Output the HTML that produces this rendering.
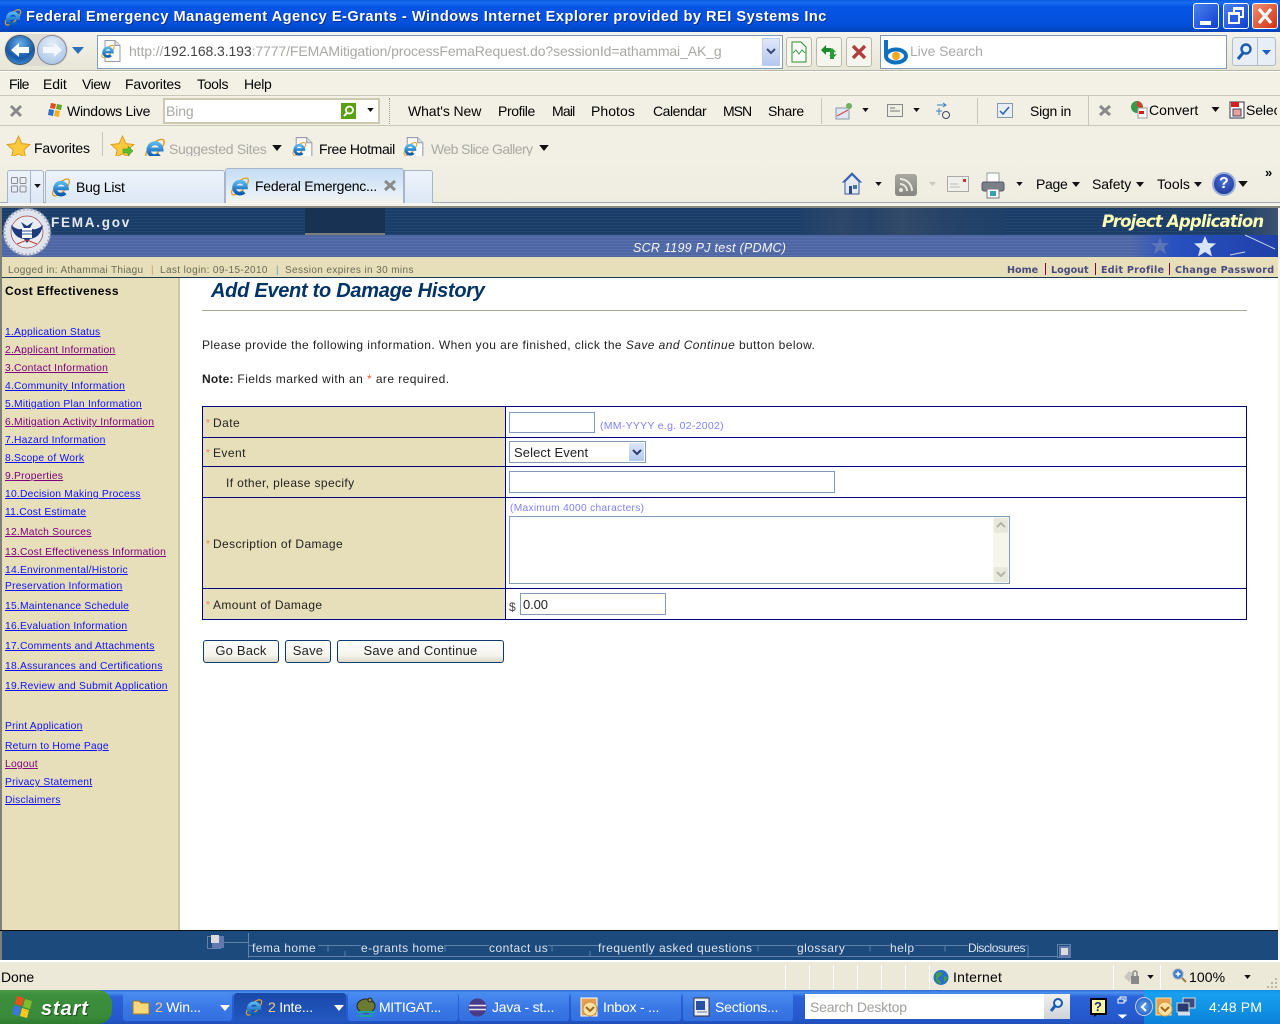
<!DOCTYPE html>
<html><head><meta charset="utf-8"><title>Federal Emergency Management Agency E-Grants</title>
<style>
html,body{margin:0;padding:0;width:1280px;height:1024px;overflow:hidden;background:#fff}
body{position:relative;font-family:"Liberation Sans",Arial,sans-serif;color:#000}
.a{position:absolute}
.t{position:absolute;white-space:nowrap;line-height:16px;font-size:14px;letter-spacing:-.1px}
.g{color:#a9a9a3}
.s{position:absolute;left:5px;font-size:10.3px;line-height:12px;letter-spacing:.22px;white-space:nowrap;color:#1010ff;text-decoration:underline}
.v{color:#800080}
.f{font-size:12px;letter-spacing:.43px;color:#222}
.st{position:absolute;left:206px;color:#f08060;font-size:10px;line-height:12px}
.in{position:absolute;box-sizing:border-box;background:#fff;border:1px solid #7f9db9}
.btn{position:absolute;box-sizing:border-box;height:23px;top:640px;border:1px solid #0c3d6e;border-radius:3px;background:linear-gradient(#fff,#f4f3ec 70%,#dcd8c8);font-size:13px;line-height:20px;text-align:center;letter-spacing:.2px;color:#222}
.fl{position:absolute;top:940px;color:#dbe3ee;font-size:12px;line-height:16px;letter-spacing:.45px;white-space:nowrap}
.task{position:absolute;top:993px;height:28px;box-sizing:border-box;background:linear-gradient(#4a8cf0,#3a78e6 50%,#3470e0);border-radius:3px;color:#fff;font-size:14px;line-height:28px;white-space:nowrap;letter-spacing:-.2px}
.r{font-size:10px;line-height:12px;color:#6b6a55;letter-spacing:.38px;position:absolute;top:265px;white-space:nowrap}
.l{font:bold 9.6px "DejaVu Sans",sans-serif;line-height:12px;letter-spacing:.25px;color:#4a4a80;position:absolute;top:265px;white-space:nowrap}
svg{position:absolute;overflow:visible}
</style></head><body>
<svg width="0" height="0" style="left:0;top:0">
<defs>
<linearGradient id="ib" x1="0" y1="0" x2="0" y2="1"><stop offset="0" stop-color="#58b4ec"/><stop offset="1" stop-color="#0b5cb0"/></linearGradient>
<symbol id="ie" viewBox="0 0 24 24">
<ellipse cx="12" cy="12.500" rx="12" ry="4.800" transform="rotate(-45 12 12.500)" fill="none" stroke="#e0a030" stroke-width="1.500"/>
<path d="M5.500 13.500h13a6.500 6.500 0 1 0-2 5" fill="none" stroke="url(#ib)" stroke-width="4"/>
</symbol>
<symbol id="pg" viewBox="0 0 24 24">
<path d="M5 1.500h10l5 5v16H5z" fill="#fbfbf8" stroke="#99a" stroke-width="1"/>
<path d="M15 1.500v5h5" fill="#ddd" stroke="#99a"/>
<use href="#ie" x="0" y="4" width="16" height="16"/>
</symbol>
<symbol id="star" viewBox="0 0 24 24"><path d="M12 1l3.300 7.300 7.700.8-5.800 5.200 1.700 7.700L12 18l-6.900 4 1.700-7.700L1 9.100l7.700-.8z" fill="#fcc83c" stroke="#d99a20" stroke-width=".9"/></symbol>
<symbol id="dn" viewBox="0 0 8 5"><path d="M0 0h8L4 5z" fill="#111"/></symbol>
</defs></svg>

<!-- title bar -->
<div class="a" style="left:0;top:0;width:1280px;height:32px;background:linear-gradient(#0a5ce0 0,#1a6cf0 8%,#0554e4 22%,#0350dc 75%,#0244b8 100%)"></div>
<svg style="left:3px;top:6px" width="20" height="22"><use href="#ie" width="20" height="22"/></svg>
<div class="t" style="left:26px;top:9px;color:#fff;font-weight:bold;font-size:14.6px;letter-spacing:.49px;text-shadow:1px 1px 0 #0a2f90">Federal Emergency Management Agency E-Grants - Windows Internet Explorer provided by REI Systems Inc</div>
<div class="a" style="left:1193px;top:3px;width:26px;height:26px;box-sizing:border-box;border:1px solid #fff;border-radius:3px;background:linear-gradient(135deg,#4a80ee,#1040d0)"><div class="a" style="left:6px;top:17px;width:11px;height:4px;background:#fff"></div></div>
<div class="a" style="left:1223px;top:3px;width:26px;height:26px;box-sizing:border-box;border:1px solid #fff;border-radius:3px;background:linear-gradient(135deg,#4a80ee,#1040d0)"><div class="a" style="left:9px;top:3px;width:11px;height:11px;box-sizing:border-box;border:2px solid #fff;border-top-width:3px"></div><div class="a" style="left:4px;top:8px;width:12px;height:12px;box-sizing:border-box;border:2px solid #fff;border-top-width:3px;background:#2a5ce0"></div></div>
<div class="a" style="left:1252px;top:3px;width:26px;height:26px;box-sizing:border-box;border:1px solid #fff;border-radius:3px;background:linear-gradient(135deg,#f09070,#d03010)"></div>
<svg style="left:1252px;top:3px" width="26" height="26"><path d="M7 6l12 14M19 6L7 20" stroke="#fff" stroke-width="3.200"/></svg>

<!-- address row -->
<div class="a" style="left:0;top:32px;width:1280px;height:38px;background:linear-gradient(#f4f3ec,#e8e6d6);border-bottom:1px solid #b8b6a4"></div>
<div class="a" style="left:0;top:71px;width:1280px;height:1px;background:#fff"></div>
<div class="a" style="left:4px;top:34px;width:64px;height:32px;border-radius:16px;background:#dcdcd4"></div>
<svg style="left:5px;top:34px" width="64" height="32">
<defs><radialGradient id="bk" cx=".5" cy=".3" r=".8"><stop offset="0" stop-color="#6ab0ea"/><stop offset=".6" stop-color="#1858a8"/><stop offset="1" stop-color="#4aa0e0"/></radialGradient>
<radialGradient id="fw" cx=".5" cy=".3" r=".8"><stop offset="0" stop-color="#e4eef8"/><stop offset="1" stop-color="#a4c0e4"/></radialGradient></defs>
<circle cx="15" cy="16" r="14.500" fill="url(#bk)" stroke="#456"/>
<path d="M6 16l8-7v4h10v6H14v4z" fill="#fff"/>
<circle cx="47" cy="16" r="14.500" fill="url(#fw)" stroke="#889"/>
<path d="M57 16l-8-7v4H38v6h11v4z" fill="#f4f8fc"/>
</svg>
<svg style="left:72px;top:47px" width="12" height="8"><path d="M0 0h12L6 7z" fill="#2a70b8"/></svg>
<div class="a" style="left:97px;top:35px;width:686px;height:34px;box-sizing:border-box;background:#fff;border:1px solid #7f9db9"></div>
<svg style="left:100px;top:38px" width="24" height="26"><use href="#pg" width="24" height="26"/></svg>
<div class="t" style="left:129px;top:43px;color:#a8a8a4;letter-spacing:-.1px">http://<span style="color:#444">192.168.3.193</span>:7777/FEMAMitigation/processFemaRequest.do?sessionId=athammai_AK_g</div>
<div class="a" style="left:762px;top:38px;width:18px;height:28px;box-sizing:border-box;background:linear-gradient(#e0e8fa,#b4c8f0);border:1px solid #c0ccec"></div>
<svg style="left:766px;top:48px" width="10" height="8"><path d="M1 1l4 4 4-4" fill="none" stroke="#3a4a70" stroke-width="2"/></svg>
<div class="a" style="left:786px;top:37px;width:26px;height:30px;box-sizing:border-box;border:1px solid #b8b8ac;border-radius:3px;background:#f6f6ee"></div>
<svg style="left:791px;top:41px" width="16" height="22"><path d="M1 1h9l5 5v15H1z" fill="#fff" stroke="#2a8a2a"/><path d="M2 12l3-3 3 4 3-4 3 3" fill="none" stroke="#3a9a4a"/></svg>
<div class="a" style="left:816px;top:37px;width:26px;height:30px;box-sizing:border-box;border:1px solid #b8b8ac;border-radius:3px;background:#f6f6ee"></div>
<svg style="left:820px;top:43px" width="18" height="18"><path d="M1 7l5-5v3h5v4H6v3zM17 11l-5 5v-3H8" fill="#1a8a2a"/><path d="M16 9l-4-4-4 4h2v7h4V9z" fill="#2a9a3a"/></svg>
<div class="a" style="left:846px;top:37px;width:26px;height:30px;box-sizing:border-box;border:1px solid #b8b8ac;border-radius:3px;background:#f6f6ee"></div>
<svg style="left:852px;top:45px" width="14" height="14"><path d="M1 1l12 12M13 1L1 13" stroke="#b04040" stroke-width="3.400"/></svg>
<div class="a" style="left:880px;top:35px;width:347px;height:34px;box-sizing:border-box;background:#fff;border:1px solid #7f9db9"></div>
<svg style="left:882px;top:38px" width="27" height="26"><path d="M4 2v16" stroke="#1070c0" stroke-width="4"/><ellipse cx="14" cy="18" rx="10" ry="6.500" fill="#fff" stroke="#1070c0" stroke-width="4"/><circle cx="14" cy="18" r="4" fill="#f8a820"/></svg>
<div class="t" style="left:910px;top:43px;color:#aaa">Live Search</div>
<div class="a" style="left:1232px;top:37px;width:26px;height:29px;box-sizing:border-box;border:1px solid #b4bcc8;border-radius:3px 0 0 3px;background:#e8eef6"></div>
<div class="a" style="left:1258px;top:37px;width:18px;height:29px;box-sizing:border-box;border:1px solid #b4bcc8;border-left:0;border-radius:0 3px 3px 0;background:#e8eef6"></div>
<svg style="left:1236px;top:42px" width="18" height="20"><circle cx="10" cy="7" r="4.500" fill="#dfefff" stroke="#1a5ab0" stroke-width="2.400"/><path d="M7 11l-5 6" stroke="#1a5ab0" stroke-width="3"/></svg>
<svg style="left:1262px;top:50px" width="10" height="6"><path d="M0 0h9L4.500 5z" fill="#1a60c8"/></svg>

<!-- menu row -->
<div class="a" style="left:0;top:72px;width:1280px;height:23px;background:#f3f1e6;border-bottom:1px solid #c8c6b6"></div>
<div class="t" style="left:9px;top:76px;letter-spacing:-.7px">File</div>
<div class="t" style="left:43px;top:76px">Edit</div>
<div class="t" style="left:82px;top:76px;letter-spacing:-.5px">View</div>
<div class="t" style="left:125px;top:76px;letter-spacing:-.2px">Favorites</div>
<div class="t" style="left:197px;top:76px;letter-spacing:-.3px">Tools</div>
<div class="t" style="left:244px;top:76px;letter-spacing:-.35px">Help</div>

<!-- windows live bar -->
<div class="a" style="left:0;top:96px;width:1280px;height:60px;background:#f2f0e5"></div>
<div class="a" style="left:0;top:125px;width:1280px;height:1px;background:#c8c6b6"></div>
<svg style="left:10px;top:105px" width="13" height="12"><path d="M1 1l10 10M11 1L1 11" stroke="#8a8a8a" stroke-width="3"/></svg>
<svg style="left:47px;top:102px" width="16" height="16"><path d="M4 1l5 1-1 5-5-1z" fill="#e04a20"/><path d="M10 2l5 1-1 5-5-1z" fill="#60a820"/><path d="M2 7l5 1-1 6-5-1z" fill="#2a70d0"/><path d="M8 8l5 1-1 6-5-1z" fill="#f0b020"/></svg>
<div class="t" style="left:67px;top:103px;letter-spacing:-.27px">Windows Live</div>
<div class="a" style="left:163px;top:98px;width:217px;height:26px;box-sizing:border-box;background:#fff;border:2px solid #cdc9b0"></div>
<div class="t g" style="left:166px;top:103px">Bing</div>
<div class="a" style="left:341px;top:103px;width:15px;height:16px;background:#5aa010"></div>
<svg style="left:341px;top:103px" width="15" height="16"><circle cx="8.500" cy="7" r="3.500" fill="none" stroke="#fff" stroke-width="1.800"/><path d="M6 10l-3 3" stroke="#fff" stroke-width="2"/></svg>
<svg style="left:367px;top:108px" width="7" height="4"><use href="#dn" width="7" height="4"/></svg>
<div class="a" style="left:389px;top:98px;height:26px;border-left:1px dotted #999"></div>
<div class="t" style="left:408px;top:103px">What's New</div>
<div class="t" style="left:498px;top:103px;letter-spacing:-.4px">Profile</div>
<div class="t" style="left:552px;top:103px;letter-spacing:-.8px">Mail</div>
<div class="t" style="left:591px;top:103px;letter-spacing:.05px">Photos</div>
<div class="t" style="left:653px;top:103px;letter-spacing:-.45px">Calendar</div>
<div class="t" style="left:723px;top:103px;letter-spacing:-1px">MSN</div>
<div class="t" style="left:768px;top:103px;letter-spacing:-.3px">Share</div>
<div class="a" style="left:821px;top:98px;width:1px;height:26px;background:#c8c6b6"></div>
<svg style="left:835px;top:102px" width="18" height="18"><rect x="1" y="6" width="13" height="11" fill="#dde8f4" stroke="#8899aa"/><path d="M2 14l11-6" stroke="#d04040"/><circle cx="14" cy="4" r="3" fill="#70b060"/></svg>
<svg style="left:862px;top:108px" width="7" height="4"><use href="#dn" width="7" height="4"/></svg>
<svg style="left:887px;top:104px" width="16" height="13"><rect x=".5" y=".5" width="15" height="12" fill="#eeeee4" stroke="#888"/><path d="M3 4h5M3 7h10" stroke="#777"/></svg>
<svg style="left:913px;top:108px" width="7" height="4"><use href="#dn" width="7" height="4"/></svg>
<svg style="left:935px;top:102px" width="16" height="18"><path d="M2 3h8M8 1l3 2-3 2M4 6v7M1 9h6" stroke="#3a80c0" fill="none"/><circle cx="11" cy="13" r="3.500" fill="none" stroke="#446"/></svg>
<div class="a" style="left:977px;top:98px;width:1px;height:26px;background:#c8c6b6"></div>
<svg style="left:997px;top:103px" width="16" height="15"><rect x=".5" y=".5" width="15" height="14" fill="#e8eef8" stroke="#8899aa"/><path d="M3 8l3 3 6-7" fill="none" stroke="#2a60b0" stroke-width="1.500"/></svg>
<div class="t" style="left:1030px;top:103px;letter-spacing:-.25px">Sign in</div>
<div class="a" style="left:1088px;top:96px;width:1px;height:29px;background:#c8c6b6"></div>
<svg style="left:1099px;top:105px" width="12" height="11"><path d="M1 1l10 9M11 1L1 10" stroke="#8a8a8a" stroke-width="3"/></svg>
<svg style="left:1130px;top:100px" width="18" height="18"><circle cx="7" cy="7" r="6" fill="#3a9a4a"/><path d="M7 1a6 6 0 0 1 5 9l-5-4z" fill="#d04030"/><rect x="8" y="8" width="9" height="10" fill="#fff" stroke="#999"/><rect x="9" y="11" width="5" height="3" fill="#d02020"/></svg>
<div class="t" style="left:1149px;top:102px;letter-spacing:.05px">Convert</div>
<svg style="left:1211px;top:107px" width="9" height="5"><use href="#dn" width="9" height="5"/></svg>
<svg style="left:1229px;top:101px" width="16" height="18"><rect x="1" y="1" width="14" height="16" fill="#fff" stroke="#334"/><rect x="2" y="1" width="8" height="5" fill="#d02020"/><rect x="4" y="8" width="8" height="7" fill="#e8a0a0" stroke="#446"/></svg>
<div class="t" style="left:1246px;top:102px;width:31px;overflow:hidden">Select</div>

<!-- favorites -->
<svg style="left:6px;top:135px" width="25" height="25"><use href="#star" width="25" height="25"/></svg>
<div class="t" style="left:34px;top:140px;letter-spacing:-.2px">Favorites</div>
<div class="a" style="left:102px;top:132px;width:1px;height:32px;background:#c8c6b6"></div>
<svg style="left:110px;top:135px" width="25" height="25"><use href="#star" width="25" height="25"/><path d="M13 14h5v-3l5 5-5 5v-3h-5z" fill="#58c030" stroke="#3a8a20" stroke-width=".5"/></svg>
<svg style="left:143px;top:135px" width="24" height="26"><use href="#ie" width="24" height="26"/></svg>
<div class="t g" style="left:169px;top:141px;letter-spacing:-.3px">Suggested Sites</div>
<svg style="left:272px;top:145px" width="10" height="6"><use href="#dn" width="10" height="6"/></svg>
<svg style="left:291px;top:135px" width="25" height="27"><use href="#pg" width="25" height="27"/></svg>
<div class="t" style="left:319px;top:141px;letter-spacing:-.35px">Free Hotmail</div>
<svg style="left:402px;top:135px" width="25" height="27"><use href="#pg" width="25" height="27"/></svg>
<div class="t g" style="left:431px;top:141px;letter-spacing:-.56px">Web Slice Gallery</div>
<svg style="left:539px;top:145px" width="10" height="6"><use href="#dn" width="10" height="6"/></svg>

<!-- tabs -->
<div class="a" style="left:0;top:156px;width:1280px;height:47px;background:linear-gradient(#f2f0e5,#efede0)"></div>
<div class="a" style="left:0;top:202px;width:1280px;height:1px;background:#a0a8bc"></div>
<div class="a" style="left:0;top:203px;width:1280px;height:3px;background:#f4f3ec"></div>
<div class="a" style="left:7px;top:170px;width:37px;height:33px;box-sizing:border-box;border:1px solid #a8b4c8;border-bottom:0;border-radius:3px 3px 0 0;background:linear-gradient(#eef3fa,#dce8f6)"></div>
<div class="a" style="left:30px;top:170px;width:1px;height:33px;background:#a8b4c8"></div>
<svg style="left:11px;top:177px" width="16" height="16"><g fill="none" stroke="#8a8a90"><rect x=".5" y=".5" width="6" height="6" rx="1"/><rect x="9" y=".5" width="6" height="6" rx="1"/><rect x=".5" y="9" width="6" height="6" rx="1"/><rect x="9" y="9" width="6" height="6" rx="1"/></g></svg>
<svg style="left:34px;top:184px" width="7" height="4"><use href="#dn" width="7" height="4"/></svg>
<div class="a" style="left:45px;top:170px;width:180px;height:33px;box-sizing:border-box;border:1px solid #a8b4c8;border-bottom:0;border-radius:3px 3px 0 0;background:linear-gradient(#eef3fa,#dce8f6)"></div>
<svg style="left:50px;top:175px" width="22" height="24"><use href="#ie" width="22" height="24"/></svg>
<div class="t" style="left:76px;top:179px;letter-spacing:-.25px">Bug List</div>
<div class="a" style="left:225px;top:168px;width:179px;height:35px;box-sizing:border-box;border:1px solid #a8b4c8;border-bottom:0;border-radius:3px 3px 0 0;background:linear-gradient(#c4dcf4,#e4eef8 70%,#f4f4ec)"></div>
<svg style="left:229px;top:174px" width="22" height="24"><use href="#ie" width="22" height="24"/></svg>
<div class="t" style="left:255px;top:178px;letter-spacing:-.26px">Federal Emergenc...</div>
<svg style="left:384px;top:180px" width="12" height="11"><path d="M1 1l10 9M11 1L1 10" stroke="#8a8a8a" stroke-width="3"/></svg>
<div class="a" style="left:404px;top:170px;width:29px;height:33px;box-sizing:border-box;border:1px solid #a8b4c8;border-bottom:0;border-radius:0 3px 0 0;background:linear-gradient(#eef3fa,#dce8f6)"></div>
<!-- command bar -->
<svg style="left:842px;top:172px" width="20" height="23"><path d="M10 1L1 10h2v12h14V10h2z" fill="#e4e8f0" stroke="#345a9a"/><path d="M2 10l8-8 8 8" fill="none" stroke="#3a64b8" stroke-width="2"/><rect x="7" y="14" width="3" height="8" fill="#2a4a8a"/><rect x="11" y="13" width="4" height="4" fill="#4a70a8"/></svg>
<svg style="left:875px;top:182px" width="7" height="4"><use href="#dn" width="7" height="4"/></svg>
<div class="a" style="left:895px;top:174px;width:22px;height:22px;border-radius:3px;background:linear-gradient(#a8a8a0,#868680)"></div>
<svg style="left:895px;top:174px" width="22" height="22"><g fill="none" stroke="#e8e8e0" stroke-width="2"><path d="M5 10a7 7 0 0 1 7 7"/><path d="M5 5a12 12 0 0 1 12 12"/></g><circle cx="6" cy="16" r="2" fill="#e8e8e0"/></svg>
<svg style="left:929px;top:182px" width="7" height="4"><path d="M0 0h7L3.500 4z" fill="#c8c8c0"/></svg>
<svg style="left:947px;top:176px" width="22" height="16"><rect x=".5" y=".5" width="21" height="15" fill="#f0f0ea" stroke="#aaa"/><path d="M3 8h8M3 11h10" stroke="#bbb"/><rect x="16" y="3" width="3" height="3" fill="#d03030"/></svg>
<svg style="left:981px;top:172px" width="24" height="27"><rect x="6" y="1" width="12" height="10" fill="#fff" stroke="#999"/><rect x="1" y="10" width="22" height="9" rx="2" fill="#7a8088" stroke="#556"/><rect x="6" y="17" width="12" height="9" fill="#fff" stroke="#778"/><rect x="9" y="19" width="6" height="5" fill="#38a0b0"/></svg>
<svg style="left:1016px;top:182px" width="7" height="4"><use href="#dn" width="7" height="4"/></svg>
<div class="t" style="left:1036px;top:176px;letter-spacing:-.3px">Page</div>
<svg style="left:1072px;top:182px" width="8" height="5"><use href="#dn" width="8" height="5"/></svg>
<div class="t" style="left:1092px;top:176px">Safety</div>
<svg style="left:1136px;top:182px" width="8" height="5"><use href="#dn" width="8" height="5"/></svg>
<div class="t" style="left:1157px;top:176px;letter-spacing:.05px">Tools</div>
<svg style="left:1194px;top:182px" width="8" height="5"><use href="#dn" width="8" height="5"/></svg>
<div class="a" style="left:1212px;top:172px;width:24px;height:24px;box-sizing:border-box;border-radius:50%;border:2px solid #9ab0d8;background:radial-gradient(circle at 50% 35%,#4a70d8,#18308c)"></div>
<div class="t" style="left:1219px;top:176px;color:#fff;font-weight:bold;font-size:16px">?</div>
<svg style="left:1238px;top:181px" width="10" height="6"><use href="#dn" width="10" height="6"/></svg>
<div class="t" style="left:1265px;top:165px;font-size:13px;font-weight:bold">»</div>

<!-- banner -->
<div class="a" style="left:0;top:206px;width:1280px;height:2px;background:#8a8a80"></div>
<div class="a" style="left:2px;top:208px;width:1276px;height:27px;background:repeating-linear-gradient(#1a3c68 0,#1a3c68 2px,#24466e 2px,#24466e 3px)"></div>
<div class="a" style="left:305px;top:208px;width:80px;height:27px;background:#183254"></div>
<div class="a" style="left:305px;top:233px;width:80px;height:2px;background:#7c7c7c"></div>
<div class="a" style="left:800px;top:208px;width:205px;height:27px;opacity:.75;background:linear-gradient(90deg,#1f4168,#33496a 20%,#2a4468 35%,#3a4e68 50%,#2a4468 70%,#1f4168)"></div>
<div class="a" style="left:1240px;top:208px;width:38px;height:27px;background:linear-gradient(90deg,#1f4168,#3c5270)"></div>
<div class="a" style="left:2px;top:235px;width:1276px;height:22px;background:repeating-linear-gradient(#4f66a4 0,#4f66a4 2px,#5870ac 2px,#5870ac 3px)"></div>
<div class="a" style="left:1130px;top:235px;width:148px;height:22px;background:linear-gradient(90deg,rgba(40,70,180,0),#2850c0 30%,#2040a8)"></div>
<svg style="left:1130px;top:235px" width="148" height="22"><path d="M75 1l3 7 8 .5-6 5 2 8-7-4.500-7 4.500 2-8-6-5 8-.5z" fill="#d8e4f8"/><path d="M30 2l2 6 7 0-5 4 2 7-6-4-6 4 2-7-5-4 7 0z" fill="#6a80b8" opacity=".7"/><path d="M115 0l30 14M100 20l15-3" stroke="#c8d4f0" fill="none"/></svg>
<svg style="left:3px;top:208px" width="48" height="48"><circle cx="24" cy="24" r="23.500" fill="#dfe4ee"/><circle cx="24" cy="24" r="23" fill="none" stroke="#8a94b0" stroke-dasharray="2 2" stroke-width="3" opacity=".7"/><circle cx="24" cy="24" r="16" fill="#e8ecf4" stroke="#a04040" stroke-width=".7"/><path d="M8 17c6 5 10 5 13 3l-3-6 6 4 6-4-3 6c3 2 7 2 13-3-2 10-7 13-13 14l-3 4-3-4C15 30 10 27 8 17z" fill="#1c3a7c"/><rect x="19" y="20" width="10" height="10" fill="#fff"/><path d="M19 23h10M19 26h10" stroke="#30508c"/><path d="M14 36l10-4 10 4" stroke="#c04030" fill="none"/></svg>
<div class="t" style="left:51px;top:215px;color:#e4e8f0;font-weight:bold;font-size:13.500px;letter-spacing:1.75px">FEMA.gov</div>
<div class="t" style="left:1102px;top:214px;color:#ffffb4;font:italic bold 16.500px/16px 'DejaVu Sans',sans-serif;letter-spacing:-.8px">Project Application</div>
<div class="t" style="left:633px;top:240px;color:#f4f6fc;font-style:italic;font-size:12.500px;letter-spacing:.27px">SCR 1199 PJ test (PDMC)</div>

<div class="a" style="left:2px;top:257px;width:1276px;height:20px;background:#e6dfb9"></div>
<div class="a" style="left:2px;top:277px;width:1276px;height:1px;background:#1c3a50"></div>
<div class="r" style="left:8px;letter-spacing:.32px">Logged in: Athammai Thiagu</div>
<div class="r" style="left:151px;color:#c0a070">|</div>
<div class="r" style="left:160px">Last login: 09-15-2010</div>
<div class="r" style="left:276px;color:#70a0b0">|</div>
<div class="r" style="left:285px">Session expires in 30 mins</div>
<div class="l" style="left:1007px;letter-spacing:0">Home</div>
<div class="a" style="left:1045px;top:263px;width:1px;height:12px;background:#800040"></div>
<div class="l" style="left:1051px;letter-spacing:0">Logout</div>
<div class="a" style="left:1095px;top:263px;width:1px;height:12px;background:#800040"></div>
<div class="l" style="left:1101px">Edit Profile</div>
<div class="a" style="left:1169px;top:263px;width:1px;height:12px;background:#800040"></div>
<div class="l" style="left:1175px">Change Password</div>

<!-- sides -->
<div class="a" style="left:0;top:208px;width:2px;height:754px;background:#808078"></div>
<div class="a" style="left:1278px;top:208px;width:2px;height:754px;background:#f4f3ec"></div>

<!-- sidebar -->
<div class="a" style="left:2px;top:278px;width:176px;height:652px;background:#e6dfb9"></div>
<div class="a" style="left:178px;top:278px;width:2px;height:652px;background:#cdc8a0"></div>
<div class="t" style="left:5px;top:283px;font-weight:bold;font-size:12px;letter-spacing:.36px">Cost Effectiveness</div>
<div class="s" style="top:327px">1.Application Status</div>
<div class="s v" style="top:345px">2.Applicant Information</div>
<div class="s v" style="top:363px">3.Contact Information</div>
<div class="s" style="top:381px">4.Community Information</div>
<div class="s" style="top:399px">5.Mitigation Plan Information</div>
<div class="s v" style="top:417px">6.Mitigation Activity Information</div>
<div class="s" style="top:435px">7.Hazard Information</div>
<div class="s" style="top:453px">8.Scope of Work</div>
<div class="s v" style="top:471px">9.Properties</div>
<div class="s" style="top:489px">10.Decision Making Process</div>
<div class="s" style="top:507px">11.Cost Estimate</div>
<div class="s v" style="top:527px">12.Match Sources</div>
<div class="s v" style="top:547px">13.Cost Effectiveness Information</div>
<div class="s" style="top:565px">14.Environmental/Historic</div>
<div class="s" style="top:581px">Preservation Information</div>
<div class="s" style="top:601px">15.Maintenance Schedule</div>
<div class="s" style="top:621px">16.Evaluation Information</div>
<div class="s" style="top:641px">17.Comments and Attachments</div>
<div class="s" style="top:661px">18.Assurances and Certifications</div>
<div class="s" style="top:681px">19.Review and Submit Application</div>
<div class="s" style="top:721px">Print Application</div>
<div class="s" style="top:741px">Return to Home Page</div>
<div class="s v" style="top:759px">Logout</div>
<div class="s" style="top:777px">Privacy Statement</div>
<div class="s" style="top:795px">Disclaimers</div>

<!-- content -->
<div class="t" style="left:211px;top:281px;font-size:20px;line-height:20px;font-weight:bold;font-style:italic;color:#003366;letter-spacing:-.28px">Add Event to Damage History</div>
<div class="a" style="left:202px;top:310px;width:1045px;height:1px;background:#aaa890"></div>
<div class="t f" style="left:202px;top:337px">Please provide the following information. When you are finished, click the <i>Save and Continue</i> button below.</div>
<div class="t f" style="left:202px;top:371px"><b style="letter-spacing:.2px">Note:</b> Fields marked with an <span style="color:#e06040">*</span> are required.</div>

<!-- form table -->
<div class="a" style="left:202px;top:406px;width:303px;height:214px;background:#e6dfb9"></div>
<div class="a" style="left:202px;top:406px;width:1045px;height:214px;box-sizing:border-box;border:1px solid #000080"></div>
<div class="a" style="left:505px;top:406px;width:1px;height:214px;background:#000080"></div>
<div class="a" style="left:202px;top:437px;width:1045px;height:1px;background:#000080"></div>
<div class="a" style="left:202px;top:466px;width:1045px;height:1px;background:#000080"></div>
<div class="a" style="left:202px;top:497px;width:1045px;height:1px;background:#000080"></div>
<div class="a" style="left:202px;top:588px;width:1045px;height:1px;background:#000080"></div>
<div class="st" style="top:418px">*</div><div class="t f" style="left:213px;top:415px">Date</div>
<div class="st" style="top:448px">*</div><div class="t f" style="left:213px;top:445px">Event</div>
<div class="t f" style="left:226px;top:475px;letter-spacing:.38px">If other, please specify</div>
<div class="st" style="top:539px">*</div><div class="t f" style="left:213px;top:536px;letter-spacing:.38px">Description of Damage</div>
<div class="st" style="top:600px">*</div><div class="t f" style="left:213px;top:597px;letter-spacing:.38px">Amount of Damage</div>

<div class="in" style="left:509px;top:412px;width:86px;height:21px"></div>
<div class="t" style="left:600px;top:418px;font-size:10.500px;color:#8080ff;letter-spacing:.28px">(MM-YYYY e.g. 02-2002)</div>
<div class="in" style="left:509px;top:441px;width:137px;height:22px"></div>
<div class="t f" style="left:514px;top:445px;font-size:13px;letter-spacing:.1px">Select Event</div>
<div class="a" style="left:629px;top:443px;width:15px;height:18px;background:linear-gradient(#dce6fa,#b4c8f0)"></div>
<svg style="left:632px;top:449px" width="10" height="7"><path d="M1 1l4 4 4-4" fill="none" stroke="#2a3a60" stroke-width="2"/></svg>
<div class="in" style="left:509px;top:471px;width:326px;height:22px"></div>
<div class="t" style="left:510px;top:501px;font-size:10.200px;color:#8080ff;letter-spacing:.3px">(Maximum 4000 characters)</div>
<div class="in" style="left:509px;top:516px;width:501px;height:68px"></div>
<div class="a" style="left:993px;top:517px;width:16px;height:66px;background:#f6f6ec"></div>
<div class="a" style="left:994px;top:518px;width:14px;height:15px;background:#e8e8dc;border-radius:2px"></div>
<div class="a" style="left:994px;top:567px;width:14px;height:15px;background:#e8e8dc;border-radius:2px"></div>
<svg style="left:996px;top:522px" width="10" height="7"><path d="M1 5l4-4 4 4" fill="none" stroke="#b4b4a8" stroke-width="2"/></svg>
<svg style="left:996px;top:571px" width="10" height="7"><path d="M1 1l4 4 4-4" fill="none" stroke="#b4b4a8" stroke-width="2"/></svg>
<div class="t f" style="left:509px;top:599px;color:#444">$</div>
<div class="in" style="left:520px;top:593px;width:146px;height:22px"></div>
<div class="t f" style="left:523px;top:597px;font-size:13px;letter-spacing:-.1px">0.00</div>

<div class="btn" style="left:203px;width:76px">Go Back</div>
<div class="btn" style="left:285px;width:46px">Save</div>
<div class="btn" style="left:337px;width:167px">Save and Continue</div>

<!-- footer -->
<div class="a" style="left:0;top:930px;width:1278px;height:1px;background:#111"></div>
<div class="a" style="left:2px;top:931px;width:1276px;height:29px;background:#1d4a7c"></div>
<div class="a" style="left:0;top:960px;width:1280px;height:2px;background:#fff"></div>
<svg style="left:0;top:931px" width="1280" height="29" fill="none" stroke="#5f82ac" stroke-width="1">
<rect x="207.500" y="5.500" width="13" height="12"/>
<path d="M221 11.500h27.500M248.500 2v25M248.500 14.500H1027M248.500 25.500H1027M328 14.500v6M345 20v5M445 14.500v6M552 14.500v6M590 20v5M758 14.500v6M870 14.500v6M945 14.500v6M1028 14v13M1028 25.500h30"/>
<rect x="1057.500" y="13.500" width="13" height="13"/>
</svg>
<div class="a" style="left:212px;top:936px;width:12px;height:12px;background:#6478b0"></div>
<div class="a" style="left:211px;top:935px;width:8px;height:8px;background:#dcdcdc"></div>
<div class="a" style="left:1059px;top:946px;width:12px;height:12px;background:#6478b0"></div>
<div class="a" style="left:1061px;top:948px;width:7px;height:7px;background:#dcdcdc"></div>
<div class="fl" style="left:252px;background:#1d4a7c;padding:0 2px 0 0">fema home</div>
<div class="fl" style="left:361px;background:#1d4a7c">e-grants home</div>
<div class="fl" style="left:489px;background:#1d4a7c">contact us</div>
<div class="fl" style="left:598px;background:#1d4a7c">frequently asked questions</div>
<div class="fl" style="left:797px;background:#1d4a7c">glossary</div>
<div class="fl" style="left:890px;background:#1d4a7c">help</div>
<div class="fl" style="left:968px;background:#1d4a7c;letter-spacing:-.45px">Disclosures</div>

<!-- status bar -->
<div class="a" style="left:0;top:962px;width:1280px;height:28px;background:#ece9d8"></div>
<div class="t" style="left:1px;top:969px">Done</div>
<div class="a" style="left:785px;top:965px;height:24px;width:1px;background:#fff;box-shadow:24px 0 #fff,48px 0 #fff,72px 0 #fff,96px 0 #fff,120px 0 #fff,144px 0 #fff"></div>
<div class="a" style="left:1113px;top:965px;height:24px;width:1px;background:#fff;box-shadow:47px 0 #fff"></div>
<svg style="left:933px;top:969px" width="16" height="17"><circle cx="8" cy="8.500" r="7.500" fill="#2a70c8"/><path d="M3 5c3-3 6-2 6 0 0 3-5 2-4 5 1 2 3 1 3 5-3 0-6-3-5-10zM11 7l3 1c0 3-1 4-3 5z" fill="#40a040"/></svg>
<div class="t" style="left:953px;top:969px;letter-spacing:.2px">Internet</div>
<svg style="left:1123px;top:969px" width="18" height="16"><path d="M1 8l5-6 3 2 1 3-4 6z" fill="#c8c8c0"/><rect x="8" y="7" width="8" height="8" fill="#888"/><path d="M10 7V4a2 2 0 0 1 4 0v3" fill="none" stroke="#888" stroke-width="1.500"/></svg>
<svg style="left:1147px;top:975px" width="7" height="4"><use href="#dn" width="7" height="4"/></svg>
<svg style="left:1172px;top:968px" width="15" height="15"><circle cx="6" cy="6" r="5" fill="#3a7ad0" stroke="#9ab"/><path d="M3.500 6h5M6 3.500v5" stroke="#fff" stroke-width="1.500"/><path d="M10 10l4 4" stroke="#a08040" stroke-width="2"/></svg>
<div class="t" style="left:1189px;top:969px;letter-spacing:.1px">100%</div>
<svg style="left:1244px;top:975px" width="7" height="4"><use href="#dn" width="7" height="4"/></svg>

<!-- taskbar -->
<div class="a" style="left:0;top:990px;width:1280px;height:34px;background:linear-gradient(#3168d5 0,#4a90ef 8%,#2a62d8 20%,#2558cc 85%,#1f4fb8 100%)"></div>
<div class="a" style="left:0;top:990px;width:112px;height:34px;border-radius:0 14px 14px 0;background:linear-gradient(#4a9a4a,#3c8f3c 15%,#3a8a3a 80%,#2e7a2e)"></div>
<svg style="left:10px;top:995px" width="24" height="24"><path d="M7 1l7 2-2 8-7-2z" fill="#e8501c"/><path d="M15 4l7 2-2 8-7-2z" fill="#8cc030" opacity=".9"/><path d="M4 10l7 2-2 9-7-2z" fill="#3a78e0"/><path d="M12 13l7 2-2 8-7-2z" fill="#fcc820"/></svg>
<div class="t" style="left:41px;top:999px;color:#fff;font-weight:bold;font-style:italic;font-size:20px;line-height:20px;letter-spacing:.9px;text-shadow:1px 1px 1px #1a4a1a">start</div>

<div class="task" style="left:123px;width:109px"><span style="position:absolute;left:32px;color:#fff"><span style="color:#fcc878">2</span> Win...</span></div>
<svg style="left:132px;top:999px" width="18" height="16"><path d="M1 2h6l2 2h8v11H1z" fill="#f8d878" stroke="#a07820"/></svg>
<svg style="left:220px;top:1005px" width="10" height="6"><path d="M0 0h10L5 6z" fill="#fff"/></svg>
<div class="task" style="left:234px;width:112px;background:linear-gradient(#1a48a8,#2258c0)"><span style="position:absolute;left:34px"><span style="color:#fcc878">2</span> Inte...</span></div>
<svg style="left:244px;top:996px" width="20" height="22"><use href="#ie" width="20" height="22"/></svg>
<svg style="left:334px;top:1005px" width="10" height="6"><path d="M0 0h10L5 6z" fill="#fff"/></svg>
<div class="task" style="left:348px;width:110px"><span style="position:absolute;left:31px;letter-spacing:-.4px">MITIGAT...</span></div>
<svg style="left:355px;top:997px" width="22" height="22"><ellipse cx="11" cy="9" rx="9" ry="7" fill="#6a7a30" stroke="#223"/><circle cx="15" cy="3" r="2" fill="#8a9a40" stroke="#222"/><path d="M2 15h18M4 19h14" stroke="#20a0a0" stroke-width="2"/></svg>
<div class="task" style="left:459px;width:110px"><span style="position:absolute;left:33px">Java - st...</span></div>
<svg style="left:468px;top:998px" width="19" height="19"><circle cx="9.500" cy="9.500" r="9" fill="#4a3a88"/><path d="M1 7.500h17M1 11.500h17" stroke="#e8e8f4" stroke-width="1.500"/></svg>
<div class="task" style="left:571px;width:110px"><span style="position:absolute;left:32px">Inbox - ...</span></div>
<svg style="left:580px;top:997px" width="20" height="21"><rect x="1" y="1" width="16" height="18" fill="#e8a050" stroke="#fff"/><circle cx="10" cy="12" r="7" fill="#fce0a0" stroke="#c89040"/><path d="M6 10l4 4 4-4" fill="none" stroke="#a06820" stroke-width="2"/></svg>
<div class="task" style="left:683px;width:110px"><span style="position:absolute;left:32px">Sections...</span></div>
<svg style="left:692px;top:997px" width="20" height="21"><rect x="2" y="1" width="15" height="18" fill="#e8eef8" stroke="#334"/><rect x="4" y="4" width="9" height="9" fill="#2a50a0"/><path d="M5 15h10" stroke="#778"/></svg>

<div class="a" style="left:805px;top:994px;width:239px;height:25px;background:#fff"></div>
<div class="t" style="left:810px;top:999px;color:#a0a09c;letter-spacing:-.2px">Search Desktop</div>
<div class="a" style="left:1044px;top:994px;width:26px;height:25px;background:linear-gradient(#f0f0ec,#d0d4d8)"></div>
<svg style="left:1049px;top:997px" width="16" height="18"><circle cx="9" cy="6" r="4" fill="#dfefff" stroke="#1a5ab0" stroke-width="2"/><path d="M6 9l-4 5" stroke="#1a5ab0" stroke-width="3"/></svg>
<svg style="left:1090px;top:998px" width="18" height="20"><rect x="1" y="1" width="15" height="15" fill="#fff8a0" stroke="#000" stroke-width="2"/><path d="M4 16v3l4-3" fill="#000"/></svg>
<div class="t" style="left:1094px;top:999px;font-size:13px;font-weight:bold;color:#1a2a80">?</div>
<svg style="left:1117px;top:995px" width="11" height="28" fill="none" stroke="#fff"><rect x="3" y="2" width="6" height="4"/><rect x="1" y="4" width="6" height="4" fill="#2558cc"/><path d="M2 20h7l-3.500 3z" fill="#fff"/></svg>
<div class="a" style="left:1144px;top:990px;width:136px;height:34px;background:linear-gradient(#1090e8,#18a0f0 10%,#1090e4 60%,#0c80d8)"></div>
<div class="a" style="left:1135px;top:997px;width:18px;height:19px;box-sizing:border-box;border:1px solid #cce;border-radius:50%;background:radial-gradient(circle,#60a8f0,#1a50b8)"></div>
<svg style="left:1140px;top:1002px" width="8" height="10"><path d="M6 1L2 5l4 4" fill="none" stroke="#fff" stroke-width="2"/></svg>
<svg style="left:1155px;top:997px" width="19" height="20"><rect x="1" y="1" width="15" height="17" fill="#e8a050" stroke="#fce0a0"/><circle cx="10" cy="12" r="7" fill="#fce0a0" stroke="#d0a040"/><path d="M6 10l4 4 4-4" fill="none" stroke="#a06820" stroke-width="2"/></svg>
<svg style="left:1176px;top:997px" width="20" height="20"><rect x="7" y="1" width="12" height="10" fill="#3a4a80" stroke="#cdd"/><rect x="1" y="6" width="12" height="9" fill="#2a3a70" stroke="#cdd"/><path d="M2 17h12" stroke="#dde" stroke-width="3"/></svg>
<div class="t" style="left:1209px;top:999px;color:#fff;letter-spacing:.12px">4:48 PM</div>
<svg style="left:1265px;top:978px" width="14" height="12" fill="#b8b6a4"><rect x="10" y="0" width="2" height="2"/><rect x="6" y="4" width="2" height="2"/><rect x="10" y="4" width="2" height="2"/><rect x="2" y="8" width="2" height="2"/><rect x="6" y="8" width="2" height="2"/><rect x="10" y="8" width="2" height="2"/></svg>
</body></html>
